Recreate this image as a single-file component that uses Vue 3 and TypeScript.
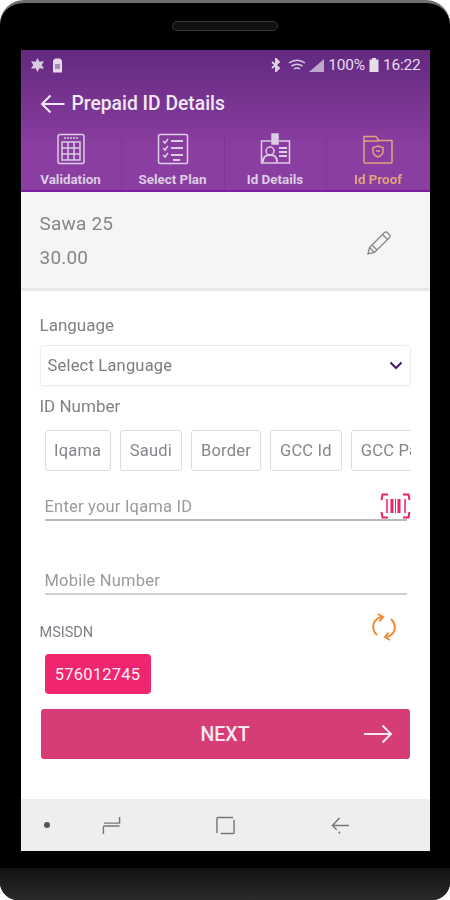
<script setup lang="ts">
const tabs = [
  { label: 'Validation', icon: 'calc' },
  { label: 'Select Plan', icon: 'list' },
  { label: 'Id Details', icon: 'card' },
  { label: 'Id Proof', icon: 'folder', active: true },
];
const idTypes = ['Iqama', 'Saudi', 'Border', 'GCC Id', 'GCC Passport'];
</script>

<template>
  <div class="phone">
    <div class="bezel-top"><div class="speaker"></div></div>
    <div class="screen">
      <header class="head">
        <div class="status">
          <svg class="st-ic" width="15" height="14" viewBox="0 0 15 14"><path d="M7.500 0l1.900 3.800 4.600-.6-2.300 3.800 2.300 3.800-4.600-.6-1.900 3.800-1.900-3.800-4.600.6L3.300 7 1 3.200l4.600.6z" fill="#d9cbe0"/></svg>
          <svg class="st-ic" width="11" height="15" viewBox="0 0 11 15"><path d="M3 .5h5l2 2v12H1v-12z" fill="#e3d9e8"/><path d="M3 6h5v5H3z" fill="#a88bb8"/></svg>
          <span class="grow"></span>
          <svg width="10" height="14" viewBox="0 0 10 14"><path d="M1 4l7 6-3 3V1l3 3-7 6" fill="none" stroke="#e6dcea" stroke-width="1.800"/></svg>
          <svg class="wifi" width="18" height="13" viewBox="0 0 18 13"><path d="M1 4q8-5.500 16 0M3.500 7q5.500-3.500 11 0M6 10q3-2 6 0" fill="none" stroke="#d9cbe0" stroke-width="1.500"/></svg>
          <svg class="signal" width="15" height="13" viewBox="0 0 15 13"><path d="M0 13L15 0v13z" fill="#bfa8cb"/></svg>
          <span class="st-text">100%</span>
          <svg width="10" height="14" viewBox="0 0 10 14"><path d="M3 0h4v1.500h2.500V14H.5V1.500H3z" fill="#e6dcea"/></svg>
          <span class="st-text">16:22</span>
        </div>
        <div class="title-row">
          <svg width="25" height="20" viewBox="0 0 25 20"><path d="M24.500 10H2M10.500 1.500L2 10l8.500 8.500" fill="none" stroke="#f1e8f4" stroke-width="2"/></svg>
          <h1>Prepaid ID Details</h1>
        </div>
        <nav class="tabs">
          <div v-for="t in tabs" :key="t.label" class="tab" :class="{ active: t.active }">
            <svg width="32" height="32" viewBox="0 0 32 32" fill="none" stroke="currentColor" stroke-width="1.500">
              <template v-if="t.icon === 'calc'">
                <path d="M5 1.500h22a2 2 0 0 1 2 2v25a2 2 0 0 1-2 2H5a2 2 0 0 1-2-2v-25a2 2 0 0 1 2-2z"/>
                <path d="M9 5h14" stroke-dasharray="2 1"/>
                <path d="M7 9h18v18H7zM13 9v18M19 9v18M7 15h18M7 21h18"/>
              </template>
              <template v-else-if="t.icon === 'list'">
                <path d="M3 1.500h26a1.500 1.500 0 0 1 1.500 1.500v26a1.500 1.500 0 0 1-1.500 1.500H3A1.500 1.500 0 0 1 1.500 29V3A1.500 1.500 0 0 1 3 1.500z"/>
                <path d="M6 8l2 2 3-4M6 15l2 2 3-4M6 22l2 2 3-4"/>
                <path d="M14 8h12M14 15h12M14 22h12M16 27h7" stroke-width="2"/>
              </template>
              <template v-else-if="t.icon === 'card'">
                <path d="M12 8H2.500v22h28V8H20"/>
                <path d="M13 1h6v10h-6z" fill="currentColor"/>
                <circle cx="11" cy="18" r="4"/>
                <path d="M4 29c0-6 3-7 7-7s7 1 7 7M20 15h8M20 19h8M20 23h8" stroke-width="2"/>
              </template>
              <template v-else>
                <path d="M2 29V3.500h12l3 4h13V29a1 1 0 0 1-1 1H3a1 1 0 0 1-1-1zM2 8h15"/>
                <path d="M16 13l5 1.500v4c0 3-2.500 4.500-5 5.500-2.500-1-5-2.500-5-5.500v-4z"/>
                <path d="M14 18h4"/>
              </template>
            </svg>
            <span>{{ t.label }}</span>
          </div>
        </nav>
      </header>

      <section class="plan">
        <div>
          <p class="plan-name">Sawa 25</p>
          <p class="plan-price">30.00</p>
        </div>
        <svg class="pencil" width="26" height="26" viewBox="0 0 26 26" fill="none" stroke="#85858b" stroke-width="1.300">
          <path d="M2 24l1.500-6.500L18.500 2.500a2 2 0 0 1 2.800 0l2.200 2.200a2 2 0 0 1 0 2.800L8.500 22.500zM3.500 17.500l5 5M6 15l5 5M16.500 4.500l5 5"/>
        </svg>
      </section>

      <main class="form">
        <label class="lbl lang-lbl">Language</label>
        <div class="select">
          <span>Select Language</span>
          <svg width="14" height="9" viewBox="0 0 14 9"><path d="M1.500 1.500L7 7l5.500-5.500" fill="none" stroke="#3f1d66" stroke-width="2"/></svg>
        </div>
        <label class="lbl id-lbl">ID Number</label>
        <div class="chips">
          <button v-for="c in idTypes" :key="c" class="chip">{{ c }}</button>
        </div>
        <div class="field id-field">
          <span>Enter your Iqama ID</span>
          <svg class="barcode" width="31" height="26" viewBox="0 0 31 26" fill="none" stroke="#ee1f6b" stroke-width="2">
            <path d="M8 1.500H2.500L1.500 7M23 1.500h5.500l1 5.500M1.500 19l1 5.500H8M29.500 19l-1 5.500H23"/>
            <path d="M7 6v14M25 6v14" stroke-width="1.500"/>
            <path d="M12 6v14M19 6v14" stroke-width="3"/>
            <path d="M15.500 6v14" stroke-width="1"/>
          </svg>
        </div>
        <div class="field mobile-field"><span>Mobile Number</span></div>
        <div class="msisdn-row">
          <label class="small-lbl">MSISDN</label>
          <svg width="26" height="28" viewBox="0 0 26 28" fill="none" stroke="#f28a35" stroke-width="2">
            <path d="M6 22C1 17 1 10 6 6c1.500-1.200 3-1.800 5-2M7 1l5 3-3.500 4.500"/>
            <path d="M20 6c5 5 5 12 0 16-1.500 1.200-3 1.800-5 2M19 27l-5-3 3.500-4.500"/>
          </svg>
        </div>
        <div class="msisdn">576012745</div>
        <button class="next">
          <span>NEXT</span>
          <svg width="29" height="20" viewBox="0 0 29 20"><path d="M0 10h27M18.500 1.500L27 10l-8.500 8.500" fill="none" stroke="#fbe7ef" stroke-width="2"/></svg>
        </button>
      </main>

      <footer class="nav">
        <span class="dot"></span>
        <svg width="19" height="19" viewBox="0 0 20 20" fill="none" stroke="#77777a" stroke-width="1.500"><path d="M18.500 1v6.500H2M18.500 10.500H2.500a1 1 0 0 0-1 1V19"/></svg>
        <svg width="19" height="19" viewBox="0 0 20 20" fill="none" stroke="#77777a" stroke-width="1.500"><path d="M18 1.500H2a1 1 0 0 0-1 1V18M5 18.500h13a1 1 0 0 0 1-1V4"/></svg>
        <svg width="19" height="19" viewBox="0 0 20 20" fill="none" stroke="#77777a" stroke-width="1.500"><path d="M19 10H2M9 2L1.500 10 6 14.500M8 16.500l1.500 2"/></svg>
      </footer>
    </div>
    <div class="bezel-bottom"></div>
  </div>
</template>

<style>
html, body { margin: 0; background: #fff; }
</style>

<style scoped>
* { box-sizing: border-box; }
.phone {
  width: 450px;
  height: 900px;
  background: #000;
  border-top: 3px solid #6e6e6e;
  border-radius: 24px 24px 18px 18px;
  display: flex;
  flex-direction: column;
  align-items: center;
  overflow: hidden;
  font-family: Roboto, "Liberation Sans", sans-serif;
}
.bezel-top {
  height: 47px;
  width: 100%;
  flex: none;
  display: flex;
  justify-content: center;
  padding-top: 18px;
}
.speaker {
  width: 106px;
  height: 10px;
  border-radius: 6px;
  background: #111;
  border: 1px solid #3a3a3a;
}
.screen {
  width: 409px;
  height: 801px;
  flex: none;
  background: #fff;
  display: flex;
  flex-direction: column;
  filter: blur(0.4px);
}
.bezel-bottom {
  margin-top: 17px;
  width: 100%;
  flex: 1;
  background: linear-gradient(#111, #2a2a2a);
}
.head {
  height: 142px;
  flex: none;
  color: #f4ecf6;
  background: linear-gradient(#63297f, #8a3ea1 70%);
  border-bottom: 2px solid #7c1fa0;
  display: flex;
  flex-direction: column;
}
.status {
  height: 30px;
  display: flex;
  align-items: center;
  gap: 4px;
  padding: 0 9px;
}
.st-ic { margin-right: 3px; }
.grow { flex: 1; }
.wifi { margin-left: 3px; }
.signal { margin-left: -1px; }
.st-text { font-size: 15.500px; color: #e6dcea; letter-spacing: -0.200px; }
.title-row {
  height: 50px;
  display: flex;
  align-items: center;
  gap: 7px;
  padding: 0 0 3px 19px;
}
h1 {
  margin: 0;
  font-size: 19.300px;
  font-weight: 500;
  color: #f1e8f4;
}
.tabs {
  flex: 1;
  display: grid;
  grid-template-columns: 101px 103px 102px 103px;
}
.tab {
  display: flex;
  flex-direction: column;
  align-items: center;
  padding-top: 3px;
  gap: 7px;
  color: #dccde4;
  font-size: 13.400px;
  line-height: 15px;
  font-weight: 700;
  border-right: 1px solid #7f3696;
}
.tab:last-child { border-right: 0; }
.tab svg { display: block; }
.tab.active { color: #e2a27d; }
.plan {
  height: 99px;
  flex: none;
  background: #f5f5f5;
  border-bottom: 3px solid #e8e8e8;
  display: flex;
  align-items: center;
  justify-content: space-between;
  padding: 0 38px 0 19px;
  color: #85858b;
}
.plan p { margin: 0; font-size: 19px; letter-spacing: 0.200px; }
.plan-name { padding: 1px 0 11px; }
.pencil { margin-top: 6px; }
.form {
  flex: 1;
  display: flex;
  flex-direction: column;
  padding: 0 19px;
}
.lbl {
  font-size: 17px;
  color: #808087;
  line-height: 18px;
}
.lang-lbl { margin-top: 25px; }
.select {
  margin-top: 11px;
  height: 41px;
  width: 371px;
  border: 1px solid #ececec;
  border-radius: 4px;
  display: flex;
  align-items: center;
  justify-content: space-between;
  padding: 0 7px;
  font-size: 16.500px;
  color: #7b7b81;
  box-shadow: 0 1px 2px rgba(0, 0, 0, .05);
  letter-spacing: 0.200px;
}
.id-lbl { margin-top: 11px; }
.chips {
  margin-top: 15px;
  margin-left: 5px;
  width: 366px;
  display: flex;
  gap: 9px;
  overflow: hidden;
}
.chip {
  flex: none;
  height: 41px;
  padding: 0 9px;
  background: #fff;
  border: 1px solid #dcdcdc;
  border-radius: 3px;
  font: 400 16.500px Roboto, sans-serif;
  color: #85858b;
  letter-spacing: 0.200px;
}
.chip:first-child { padding: 0 8.500px; }
.field {
  position: relative;
  margin-left: 5px;
  width: 362px;
  font-size: 16.500px;
  color: #9a9a9f;
  letter-spacing: 0.200px;
  display: flex;
  align-items: flex-end;
}
.id-field { margin-top: 23px; height: 27px; padding-bottom: 3px; border-bottom: 2px solid #b9b9b9; }
.mobile-field { margin-top: 53px; height: 21px; padding-bottom: 3px; border-bottom: 2px solid #d0d0d0; }
.barcode { position: absolute; right: -4px; bottom: 0; }
.msisdn-row {
  height: 34px;
  margin-top: 15px;
  display: flex;
  justify-content: space-between;
  align-items: center;
  padding-right: 14px;
}
.small-lbl { font-size: 14.500px; color: #808087; padding-top: 10px; }
.msisdn {
  margin-top: 10px;
  margin-left: 5px;
  width: 106px;
  height: 40px;
  border-radius: 4px;
  background: #f0256f;
  color: #fdf0f5;
  font-size: 16.500px;
  display: flex;
  align-items: center;
  justify-content: center;
  letter-spacing: 0.200px;
}
.next {
  margin-top: 15px;
  margin-left: 1px;
  height: 50px;
  width: 369px;
  border: 0;
  border-radius: 3px;
  background: #d63d76;
  color: #fbe7ef;
  font: 500 19.500px Roboto, sans-serif;
  position: relative;
  display: flex;
  align-items: center;
  justify-content: center;
  padding: 0;
}
.next svg { position: absolute; right: 17px; top: 15px; }
.nav {
  height: 52px;
  flex: none;
  background: #eeeeee;
  display: flex;
  align-items: center;
  padding-left: 23px;
}
.dot { width: 6px; height: 6px; border-radius: 50%; background: #555; margin-right: 52px; }
.nav svg:nth-of-type(2) { margin-left: 95px; }
.nav svg:nth-of-type(3) { margin-left: 96px; }
</style>
